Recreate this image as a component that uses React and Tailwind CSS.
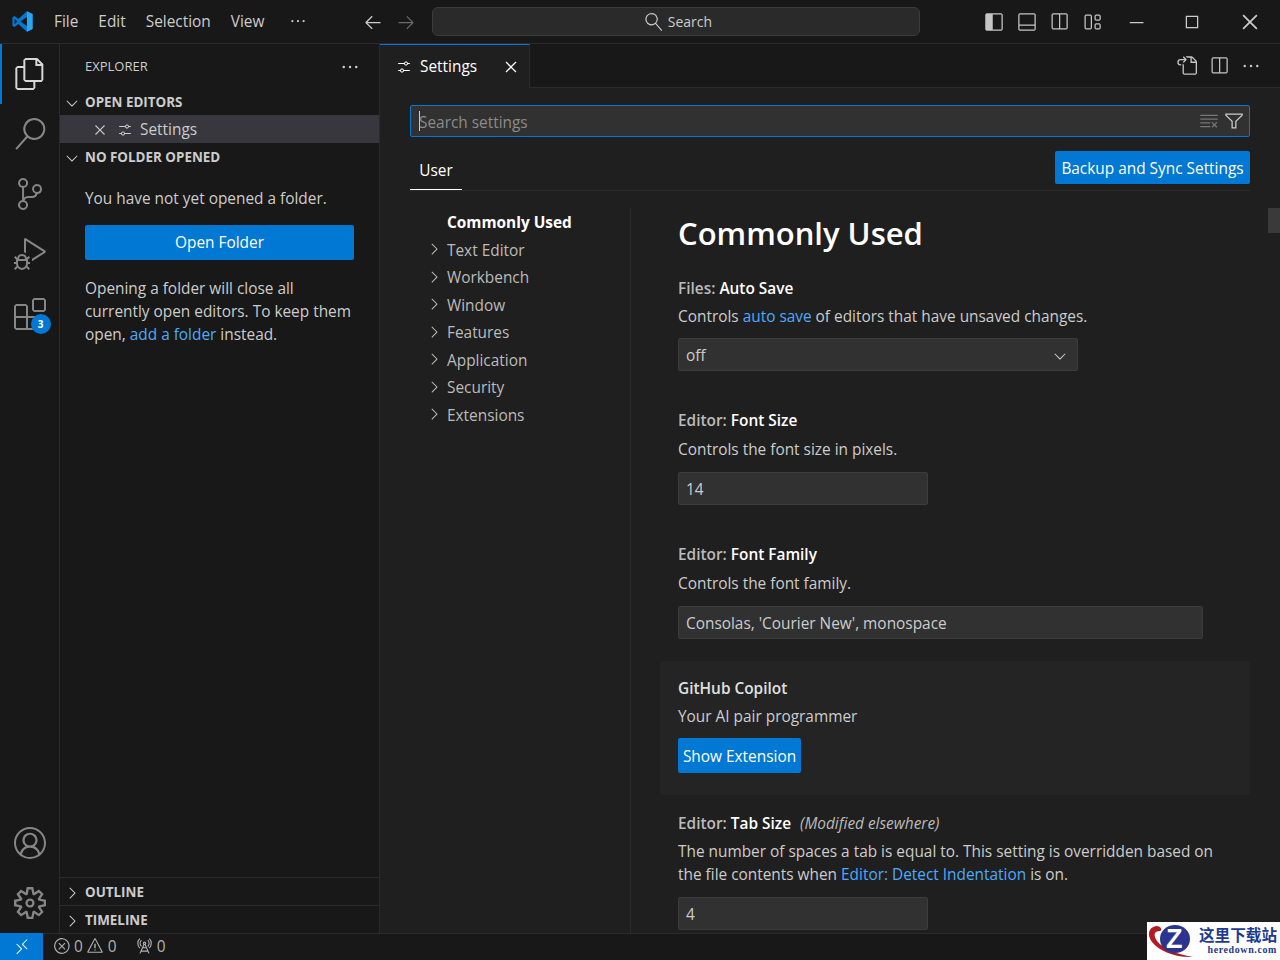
import {
  VscFiles, VscSearch, VscSourceControl, VscDebugAlt, VscExtensions, VscAccount, VscSettingsGear,
  VscEllipsis, VscChevronRight, VscChevronDown, VscClose, VscSettings, VscArrowLeft, VscArrowRight,
  VscLayoutSidebarLeft, VscLayoutPanelOff, VscSplitHorizontal, VscLayout, VscChromeMinimize,
  VscChromeMaximize, VscChromeClose, VscGoToFile, VscClearAll, VscFilter,
  VscRemote, VscError, VscWarning, VscRadioTower,
} from "react-icons/vsc"

const font = { fontFamily: '"Open Sans", sans-serif' }

function Logo() {
  return (
    <svg width="21" height="21" viewBox="0 0 100 100">
      <path d="M71 99 98 86V14L71 1 30 38 12 24 2 30v40l10 6 18-14z" fill="#0078d4" />
      <path d="M71 1 98 14v72L71 99z" fill="#2aa5ee" />
      <path d="M71 28 40 50l31 22z" fill="#181818" />
      <path d="M12 37v26l13-13z" fill="#181818" />
    </svg>
  )
}

function SectionHeader({ label, open, className = "" }) {
  return (
    <div className={`flex items-center h-[27px] pt-[2px] text-[13.4px] font-bold text-[#cccccc] ${className}`}>
      <span className="w-[25px] pl-[3px] flex">
        {open ? <VscChevronDown size={18} /> : <VscChevronRight size={18} />}
      </span>
      {label}
    </div>
  )
}

function TocItem({ label }) {
  return (
    <div className="flex items-center h-[27.5px] text-[#bbbbbb]">
      <span className="w-[37px] pl-[15px] flex -mt-[2px]"><VscChevronRight size={18} /></span>
      {label}
    </div>
  )
}

function SettingTitle({ group, name, extra }) {
  return (
    <div className="h-[28px] flex items-center font-semibold text-[#bbbbbb]">
      {group}: <span className="text-white ml-[4px]">{name}</span>
      {extra && <em className="ml-[9px] font-normal">{extra}</em>}
    </div>
  )
}

function TextBox({ value, width }) {
  return (
    <div className={`h-[33px] pt-[2px] flex items-center px-[7px] bg-[#313131] border border-[#3c3c3c] rounded-[2px] text-[#cccccc] ${width}`}>
      {value}
    </div>
  )
}

function Watermark() {
  return (
    <div className="absolute right-0 bottom-0 w-[133px] h-[38px] bg-white flex items-center overflow-hidden">
      <div className="relative w-[50px] h-[38px] shrink-0">
        <svg className="absolute inset-0" width="50" height="38" viewBox="0 0 50 38">
          <path d="M9 4C1 6 0 13 5 20c7 9 24 16 41 15-13-2-30-8-36-16C6 13 7 9 13 9c2 0 2-5-4-5z" fill="#b01c22" />
          <ellipse cx="28" cy="17" rx="15" ry="14" fill="#2b3590" />
        </svg>
        <span className="absolute left-[19px] top-[1px] text-[27px] leading-[32px] font-bold text-white" style={{ fontFamily: '"Liberation Sans", sans-serif' }}>Z</span>
      </div>
      <div className="flex flex-col items-end w-[79px] ml-[1px]">
        <span className="text-[15.6px] leading-[17px] font-bold text-[#1f3a93] whitespace-nowrap" style={{ fontFamily: '"Noto Sans CJK SC", serif' }}>这里下载站</span>
        <span className="text-[10px] leading-[13px] font-bold text-[#1f3a93] tracking-[0.6px] whitespace-nowrap" style={{ fontFamily: '"Liberation Serif", serif' }}>heredown.com</span>
      </div>
    </div>
  )
}

export default function App() {
  return (
    <div className="relative w-[1280px] h-[960px] overflow-hidden flex flex-col bg-[#1f1f1f] text-[15.4px] text-[#cccccc]" style={font}>
      {/* title bar */}
      <div className="h-[44px] shrink-0 flex items-center bg-[#181818] border-b border-[#2b2b2b]">
        <div className="w-[44px] flex justify-center"><Logo /></div>
        <div className="flex gap-[20px] ml-[10px] text-[#cccccc]">
          <span>File</span><span>Edit</span><span>Selection</span><span>View</span>
        </div>
        <VscEllipsis size={18} className="ml-[25px] -mt-[2px]" />
        <VscArrowLeft size={20} className="ml-[56px]" />
        <VscArrowRight size={20} className="ml-[13px] text-[#6a6a6a]" />
        <div className="ml-[16px] w-[488px] h-[29px] pl-[4px] rounded-[6px] bg-[#2a2a2a] border border-[#3c3c3c] flex items-center justify-center gap-[5px] text-[14px]">
          <VscSearch size={18} className="-scale-x-100" /> Search
        </div>
        <div className="flex items-center gap-[12.5px] ml-[64px] text-[#c5c5c5]">
          <VscLayoutSidebarLeft size={20} />
          <VscLayoutPanelOff size={20} />
          <VscSplitHorizontal size={20} />
          <VscLayout size={20} />
        </div>
        <VscChromeMinimize size={20} className="ml-[24px]" />
        <VscChromeMaximize size={20} className="ml-[36px]" />
        <VscChromeClose size={22} className="ml-[37px]" />
      </div>

      <div className="flex-1 flex min-h-0">
        {/* activity bar */}
        <div className="w-[60px] shrink-0 flex flex-col items-center bg-[#181818] border-r border-[#2b2b2b] text-[#868686]">
          <div className="relative w-full h-[60px] flex items-center justify-center text-[#d7d7d7]">
            <span className="absolute left-0 top-0 w-[2px] h-[60px] bg-[#0078d4]" />
            <VscFiles size={32} />
          </div>
          <div className="h-[60px] flex items-center justify-center"><VscSearch size={32} /></div>
          <div className="h-[60px] flex items-center justify-center"><VscSourceControl size={32} /></div>
          <div className="h-[60px] flex items-center justify-center"><VscDebugAlt size={32} /></div>
          <div className="relative h-[60px] flex items-center justify-center">
            <VscExtensions size={32} />
            <span className="absolute right-[-5px] bottom-[10px] w-[20px] h-[20px] rounded-full bg-[#0078d4] text-white text-[10px] font-bold flex items-center justify-center">3</span>
          </div>
          <div className="mt-auto h-[60px] flex items-center justify-center"><VscAccount size={32} /></div>
          <div className="h-[60px] flex items-center justify-center"><VscSettingsGear size={32} /></div>
        </div>

        {/* side bar */}
        <div className="w-[320px] shrink-0 flex flex-col bg-[#181818] border-r border-[#2b2b2b]">
          <div className="h-[44px] pt-[2px] flex items-center justify-between pl-[25px] pr-[19px] text-[13px]">
            EXPLORER <VscEllipsis size={20} />
          </div>
          <SectionHeader label="OPEN EDITORS" open />
          <div className="h-[28px] pt-[2px] flex items-center bg-[#37373d] pl-[31px]">
            <VscClose size={18} />
            <VscSettings size={16} className="ml-[8px]" />
            <span className="ml-[7px]">Settings</span>
          </div>
          <SectionHeader label="NO FOLDER OPENED" open />
          <div className="px-[25px] pt-[17px]">
            <p>You have not yet opened a folder.</p>
            <div className="mt-[15px] h-[35px] flex items-center justify-center rounded-[2px] bg-[#0078d4] text-white">Open Folder</div>
            <p className="mt-[17px] leading-[23px]">
              Opening a folder will close all currently open editors. To keep them open, <span className="text-[#4daafc]">add a folder</span> instead.
            </p>
          </div>
          <SectionHeader label="OUTLINE" className="mt-auto border-t border-[#2b2b2b] h-[28px]" />
          <SectionHeader label="TIMELINE" className="border-t border-[#2b2b2b] h-[28px]" />
        </div>

        {/* editor */}
        <div className="flex-1 min-w-0 flex flex-col">
          <div className="h-[44px] shrink-0 flex items-stretch bg-[#181818] border-b border-[#2b2b2b]">
            <div className="w-[150px] flex items-center pl-[16px] -mb-px bg-[#1f1f1f] border-t border-[#0078d4] border-r border-r-[#2b2b2b] text-white">
              <VscSettings size={16} />
              <span className="ml-[8px]">Settings</span>
              <VscClose size={20} className="ml-[24px]" />
            </div>
            <div className="ml-auto flex items-center gap-[12px] pr-[19px] text-[#c5c5c5]">
              <VscGoToFile size={21} />
              <VscSplitHorizontal size={20} />
              <VscEllipsis size={20} />
            </div>
          </div>

          <div className="relative flex-1 min-h-0 pl-[30px] pr-[30px] pt-[17px]">
            <div className="h-[32px] flex items-center pl-[8px] pr-[5px] bg-[#313131] border border-[#0078d4] rounded-[2px] text-[#8b8b8b]">
              <span className="w-px h-[20px] bg-[#cccccc]" />
              <span className="-ml-px pt-[3px]">Search settings</span>
              <VscClearAll size={20} className="ml-auto text-[#777777]" />
              <VscFilter size={20} className="ml-[5px] text-[#cccccc]" />
            </div>
            <div className="mt-[14px] h-[40px] flex items-start justify-between border-b border-[#2b2b2b]">
              <div className="w-[52px] h-[39px] pt-[8px] flex justify-center items-start border-b border-white text-white">
                <span className="h-[24px] leading-[24px]">User</span>
              </div>
              <div className="h-[33px] w-[195px] pt-[2px] flex items-center justify-center rounded-[2px] bg-[#0078d4] text-white">Backup and Sync Settings</div>
            </div>

            <div className="flex mt-[17px] h-[1000px]">
              {/* toc */}
              <div className="w-[221px] shrink-0 border-r border-[#2b2b2b] pt-px">
                <div className="h-[27.5px] pl-[37px] flex items-center font-bold text-white">Commonly Used</div>
                {["Text Editor", "Workbench", "Window", "Features", "Application", "Security", "Extensions"].map((item) => (
                  <TocItem key={item} label={item} />
                ))}
              </div>

              {/* settings list */}
              <div className="flex-1 min-w-0 pl-[29px]">
                <div className="pl-[18px]">
                  <h1 className="h-[50px] text-[31px] leading-[50px] font-semibold text-white">Commonly Used</h1>
                  <div className="mt-[17px]">
                    <SettingTitle group="Files" name="Auto Save" />
                    <p className="h-[28px] leading-[28px]">Controls <span className="text-[#4daafc]">auto save</span> of editors that have unsaved changes.</p>
                    <div className="mt-[7px] w-[400px] h-[33px] pt-[2px] flex items-center justify-between px-[7px] bg-[#313131] border border-[#3c3c3c] rounded-[2px]">
                      off <VscChevronDown size={18} className="mr-[1px]" />
                    </div>
                  </div>
                  <div className="mt-[36px]">
                    <SettingTitle group="Editor" name="Font Size" />
                    <p className="h-[30px] leading-[30px] mb-[7px]">Controls the font size in pixels.</p>
                    <TextBox value="14" width="w-[250px]" />
                  </div>
                  <div className="mt-[36px]">
                    <SettingTitle group="Editor" name="Font Family" />
                    <p className="h-[30px] leading-[30px] mb-[7px]">Controls the font family.</p>
                    <TextBox value="Consolas, 'Courier New', monospace" width="w-[525px]" />
                  </div>
                </div>
                <div className="mt-[22px] h-[134px] pl-[18px] pt-[14px] bg-[#242424]">
                  <div className="h-[28px] flex items-center font-semibold text-[#e0e0e0]">GitHub Copilot</div>
                  <p className="h-[28px] leading-[28px]">Your AI pair programmer</p>
                  <div className="mt-[7px] w-[123px] h-[35px] pt-[2px] flex items-center justify-center rounded-[2px] bg-[#0078d4] text-white">Show Extension</div>
                </div>
                <div className="pl-[18px] mt-[15px]">
                  <SettingTitle group="Editor" name="Tab Size" extra="(Modified elsewhere)" />
                  <p className="leading-[23px] mt-[2px] max-w-[550px]">
                    The number of spaces a tab is equal to. This setting is overridden based on the file contents when <span className="text-[#4daafc]">Editor: Detect Indentation</span> is on.
                  </p>
                  <div className="mt-[11px]"><TextBox value="4" width="w-[250px]" /></div>
                </div>
              </div>
            </div>
            {/* scroll thumb */}
            <div className="absolute right-0 top-[120px] w-[12px] h-[25px] bg-[#3a3a3a]" />
          </div>
        </div>
      </div>

      {/* status bar */}
      <div className="relative h-[27px] shrink-0 flex items-center bg-[#181818] border-t border-[#2b2b2b] text-[15.4px] text-[#b0b0b0]">
        <div className="w-[43px] h-[27px] -mt-px flex items-center justify-center bg-[#0078d4] text-white"><VscRemote size={18} /></div>
        <div className="flex items-center -mt-px">
          <VscError size={18} className="ml-[10px]" />
          <span className="ml-[3px]">0</span>
          <VscWarning size={18} className="ml-[3px]" />
          <span className="ml-[4px]">0</span>
          <VscRadioTower size={18} className="ml-[18px]" />
          <span className="ml-[4px]">0</span>
        </div>
      </div>
      <Watermark />
    </div>
  )
}
